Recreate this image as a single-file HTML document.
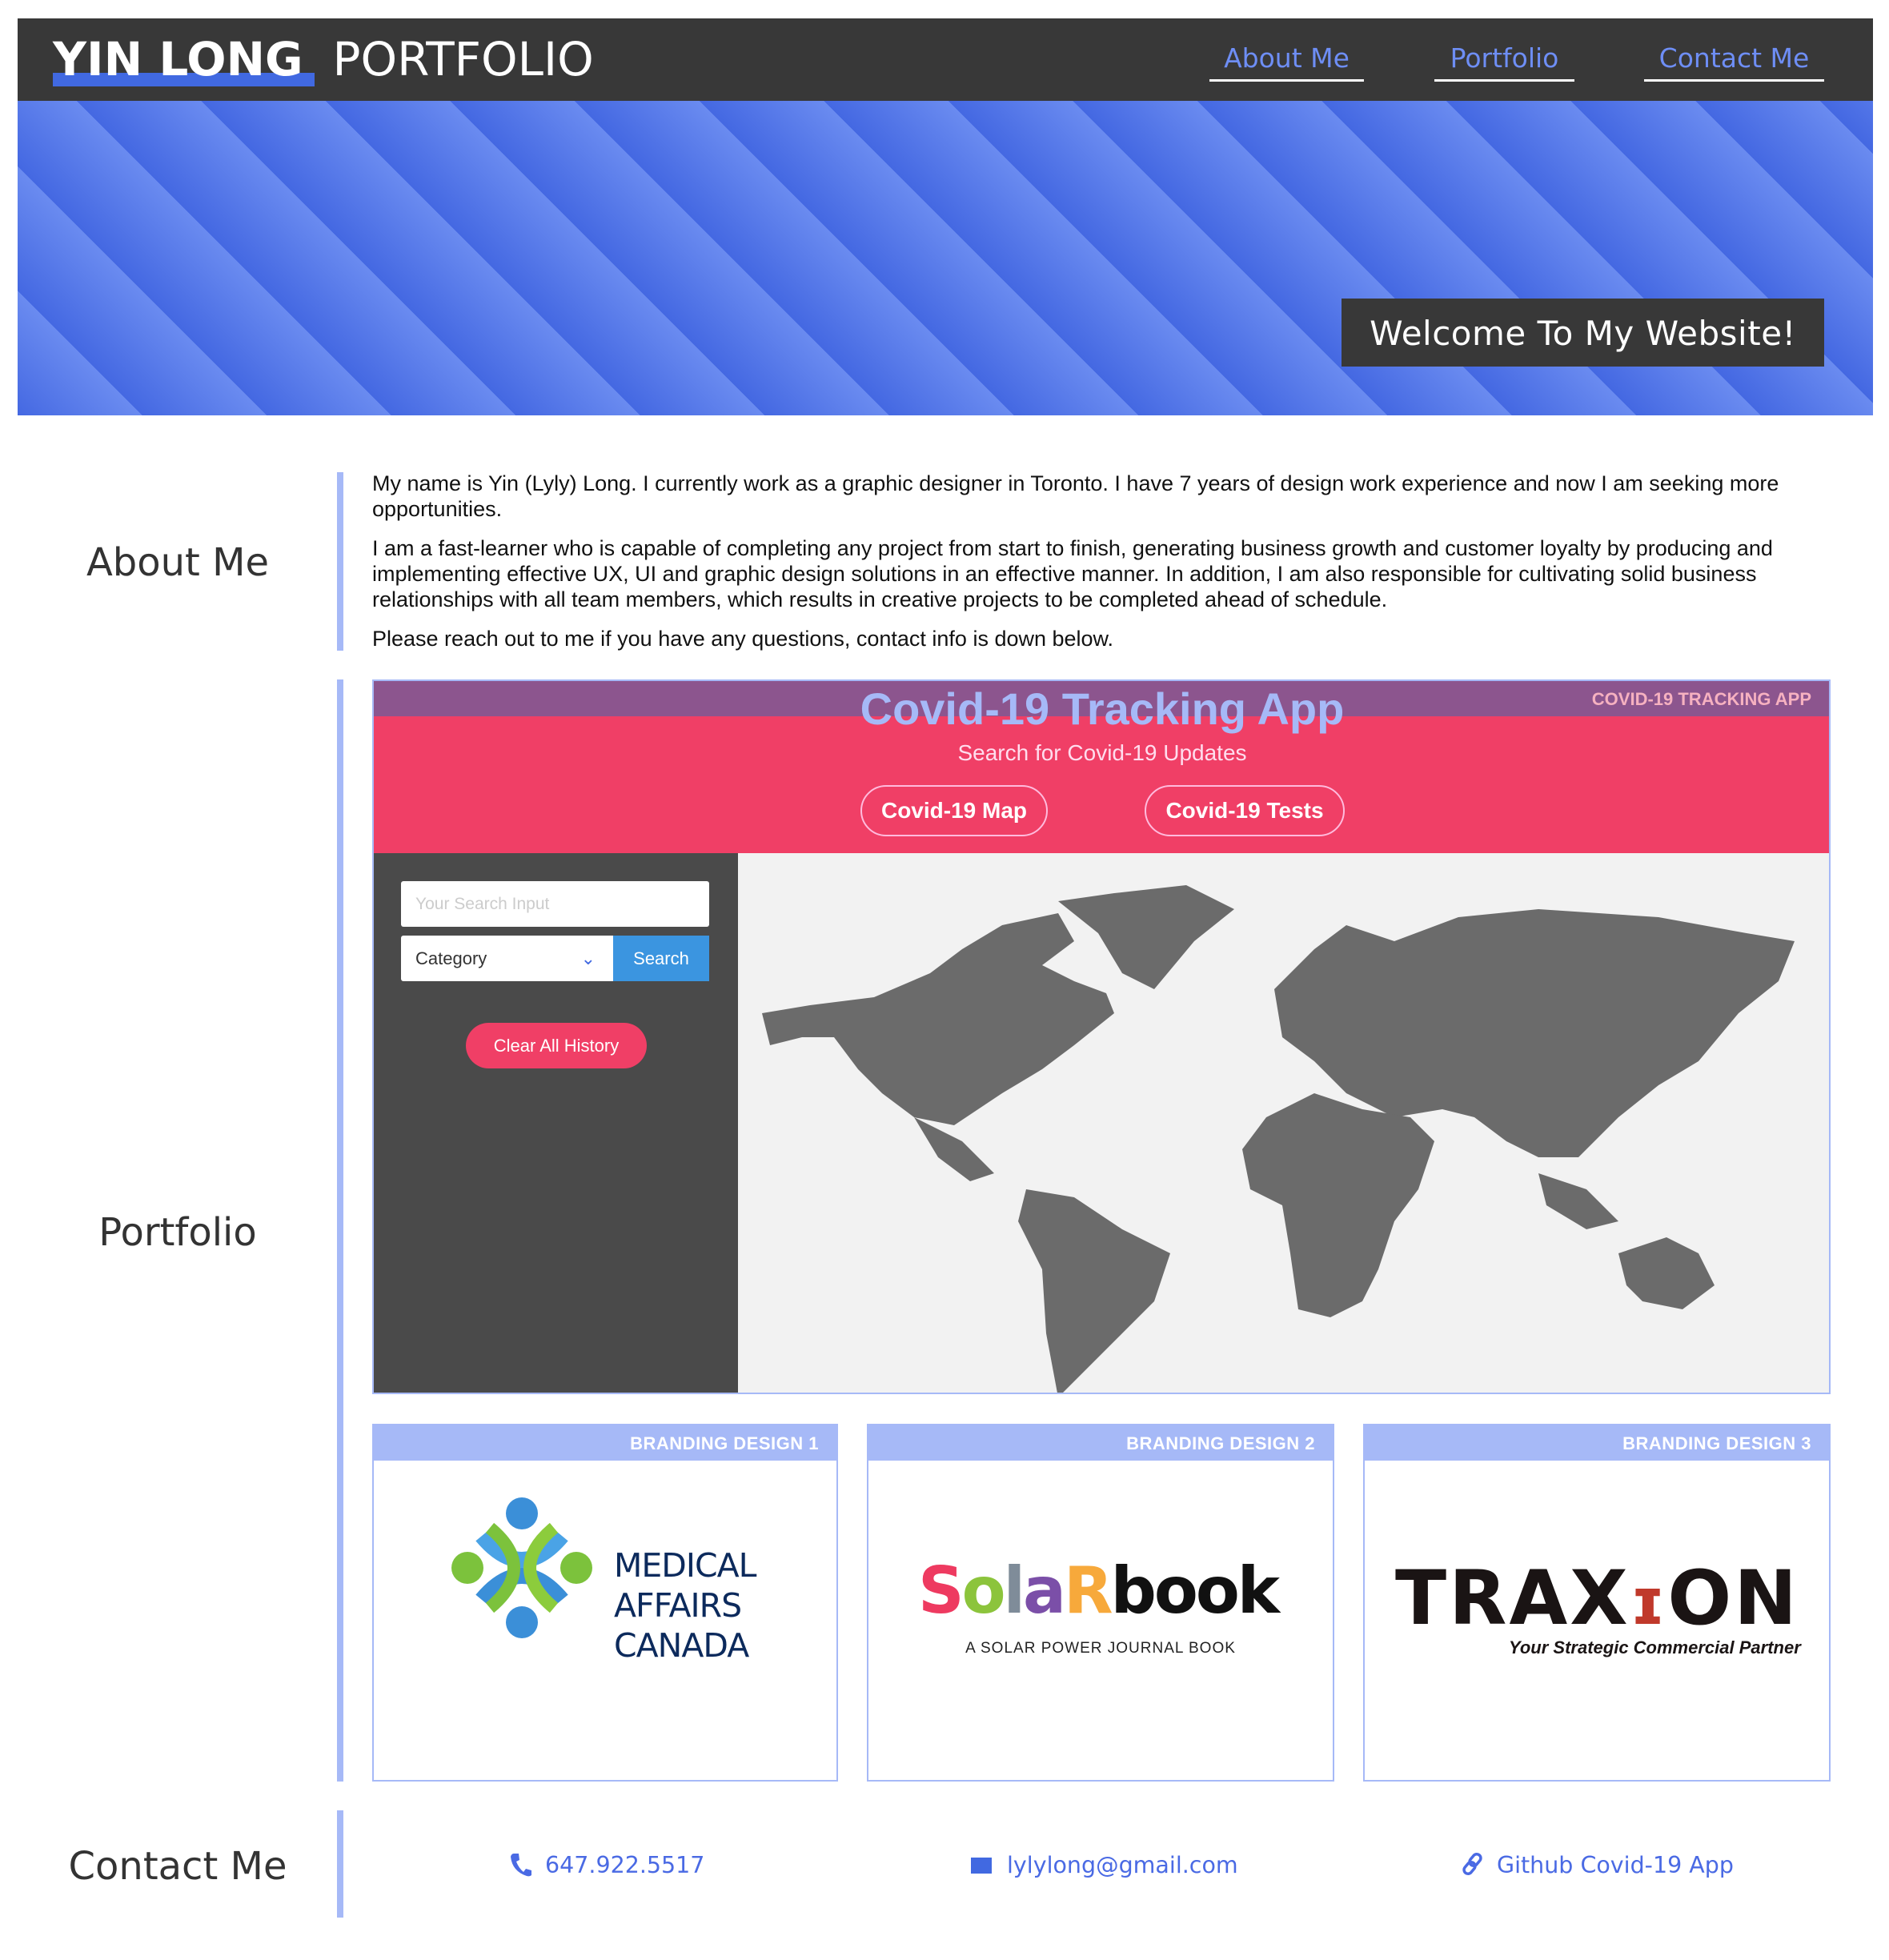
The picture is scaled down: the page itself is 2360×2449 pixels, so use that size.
<!DOCTYPE html>
<html><head><meta charset="utf-8"><style>
*{margin:0;padding:0;box-sizing:border-box}
body{width:2360px;height:2449px;background:#fff;position:relative;overflow:hidden;font-family:"Liberation Sans",sans-serif}
.abs{position:absolute}
.hdr{left:22px;top:23px;width:2318px;height:103px;background:#383838}
.hero{left:22px;top:126px;width:2318px;height:393px;background:repeating-linear-gradient(45deg,#4468e2 0px,#6a8bf0 110px)}
.logo{left:66px;top:40px;font-family:"DejaVu Sans",sans-serif;font-size:58px;color:#fff;white-space:nowrap}
.nav{font-family:"DejaVu Sans",sans-serif;font-size:33px;color:#6e8ef5;text-align:center;border-bottom:3px solid #fff;height:57px;line-height:56px;top:45px}
.lbl{font-family:"DejaVu Sans",sans-serif;font-size:48px;color:#333;width:444px;text-align:center;left:0}
.bar{left:421px;width:8px;background:#a6b9f7}
.p{font-size:27px;line-height:32px;color:#111;left:465px;width:1810px}
.card{border:2px solid #a6b9f7;background:#fff}
.ch{background:#a6b9f7;height:44px;color:#fff;font-weight:bold;font-size:22px;text-align:right;padding-right:22px;line-height:46px;letter-spacing:0.5px}
.ct{font-family:"DejaVu Sans",sans-serif;font-size:28.5px;color:#4a6ae4;top:2314px}
</style></head><body>
<div class="abs hdr"></div>
<div class="abs" style="left:66px;top:91px;width:327px;height:17px;background:#4169e1"></div>
<div class="abs logo"><b>YIN LONG</b>&nbsp; PORTFOLIO</div>
<div class="abs nav" style="left:1511px;width:193px">About Me</div>
<div class="abs nav" style="left:1792px;width:175px">Portfolio</div>
<div class="abs nav" style="left:2054px;width:225px">Contact Me</div>
<div class="abs hero"></div>
<div class="abs" style="left:1676px;top:373px;width:603px;height:85px;background:#383838;color:#fff;font-family:'DejaVu Sans',sans-serif;font-size:42px;line-height:88px;text-align:center;letter-spacing:0.5px">Welcome To My Website!</div>

<div class="abs lbl" style="top:675px">About Me</div>
<div class="abs bar" style="top:590px;height:223px"></div>
<div class="abs p" style="top:588px">My name is Yin (Lyly) Long. I currently work as a graphic designer in Toronto. I have 7 years of design work experience and now I am seeking more opportunities.</div>
<div class="abs p" style="top:669px">I am a fast-learner who is capable of completing any project from start to finish, generating business growth and customer loyalty by producing and implementing effective UX, UI and graphic design solutions in an effective manner. In addition, I am also responsible for cultivating solid business relationships with all team members, which results in creative projects to be completed ahead of schedule.</div>
<div class="abs p" style="top:782px">Please reach out to me if you have any questions, contact info is down below.</div>

<div class="abs lbl" style="top:1512px">Portfolio</div>
<div class="abs bar" style="top:849px;height:1377px"></div>

<div class="abs card" style="left:465px;top:849px;width:1822px;height:893px;overflow:hidden">
 <div class="abs" style="left:0;top:0;width:1820px;height:215px;background:#f03f66"></div>
 <div class="abs" style="left:0;top:0;width:1820px;height:44px;background:#8c558e"></div>
 <div class="abs" style="left:0;top:2px;width:1820px;text-align:center;font-size:56px;font-weight:bold;color:#a6b9f7">Covid-19 Tracking App</div>
 <div class="abs" style="right:22px;top:10px;font-size:22px;font-weight:bold;color:#f6b1c0">COVID-19 TRACKING APP</div>
 <div class="abs" style="left:0;top:74px;width:1820px;text-align:center;font-size:28px;color:#fde">Search for Covid-19 Updates</div>
 <div class="abs" style="left:608px;top:130px;width:234px;height:64px;border:2px solid #fbd;border-radius:32px;color:#fff;font-size:28px;font-weight:bold;text-align:center;line-height:60px">Covid-19 Map</div>
 <div class="abs" style="left:963px;top:130px;width:250px;height:64px;border:2px solid #fbd;border-radius:32px;color:#fff;font-size:28px;font-weight:bold;text-align:center;line-height:60px">Covid-19 Tests</div>
 <div class="abs" style="left:0;top:215px;width:455px;height:680px;background:#4a4a4a"></div>
 <div class="abs" style="left:455px;top:215px;width:1366px;height:680px;background:#f2f2f2"></div>
 <div class="abs" style="left:34px;top:250px;width:385px;height:57px;background:#fff;border-radius:3px;color:#ccc;font-size:21px;line-height:57px;padding-left:18px">Your Search Input</div>
 <div class="abs" style="left:34px;top:318px;width:265px;height:57px;background:#fff;border-radius:3px 0 0 3px;color:#333;font-size:22px;line-height:57px;padding-left:18px">Category<span style="position:absolute;right:22px;color:#4169e1">&#8964;</span></div>
 <div class="abs" style="left:299px;top:318px;width:120px;height:57px;background:#3b95e0;color:#fff;font-size:22px;line-height:57px;text-align:center">Search</div>
 <div class="abs" style="left:115px;top:427px;width:226px;height:57px;background:#f03f66;border-radius:29px;color:#fff;font-size:22px;line-height:57px;text-align:center">Clear All History</div>
 <svg class="abs" style="left:455px;top:215px" width="1366" height="680" viewBox="0 0 1366 680" fill="#6b6b6b">
  <path d="M30 200 L90 190 L170 180 L240 150 L280 120 L330 90 L400 75 L420 110 L380 140 L420 160 L460 175 L470 200 L420 240 L380 270 L330 300 L270 340 L220 330 L180 300 L150 270 L120 230 L80 230 L40 240Z"/>
  <path d="M400 60 L470 50 L560 40 L620 70 L570 110 L520 170 L480 150 L450 100Z"/>
  <path d="M220 330 L280 360 L320 400 L290 410 L250 380Z"/>
  <path d="M360 420 L420 430 L480 470 L540 500 L520 560 L480 600 L430 650 L400 680 L385 600 L380 520 L350 460Z"/>
  <path d="M670 170 L720 120 L760 90 L820 110 L900 80 L1000 70 L1150 80 L1260 100 L1320 110 L1300 160 L1250 200 L1200 260 L1150 290 L1100 330 L1050 380 L1000 380 L960 360 L920 330 L880 320 L820 330 L760 300 L720 260 L680 230Z"/>
  <path d="M660 330 L720 300 L780 320 L840 330 L870 360 L850 420 L820 460 L800 520 L780 560 L740 580 L700 570 L690 500 L680 440 L640 420 L630 370Z"/>
  <path d="M1100 500 L1160 480 L1200 500 L1220 540 L1180 570 L1130 560 L1110 540Z"/>
  <path d="M1000 400 L1060 420 L1100 460 L1060 470 L1010 440Z"/>
 </svg>
</div>

<div class="abs card" style="left:465px;top:1779px;width:582px;height:447px"><div class="ch">BRANDING DESIGN 1</div>
 <svg class="abs" style="left:95px;top:88px" width="180" height="180" viewBox="0 0 180 180">
  <circle cx="90" cy="22" r="20" fill="#3b8fd8"/><circle cx="90" cy="158" r="20" fill="#3b8fd8"/>
  <circle cx="22" cy="90" r="20" fill="#7cc23c"/><circle cx="158" cy="90" r="20" fill="#7cc23c"/>
  <path d="M40 50 Q90 110 140 50" stroke="#4aa3e6" stroke-width="20" fill="none"/>
  <path d="M40 130 Q90 70 140 130" stroke="#3b8fd8" stroke-width="20" fill="none"/>
  <path d="M50 40 Q110 90 50 140" stroke="#7cc23c" stroke-width="16" fill="none"/>
  <path d="M130 40 Q70 90 130 140" stroke="#8ccc3c" stroke-width="16" fill="none"/>
 </svg>
 <div class="abs" style="left:300px;top:150px;font-size:41px;line-height:50px;color:#0c2a5c;font-family:'DejaVu Sans',sans-serif;letter-spacing:-1px">MEDICAL<br>AFFAIRS<br>CANADA</div>
</div>
<div class="abs card" style="left:1083px;top:1779px;width:584px;height:447px"><div class="ch">BRANDING DESIGN 2</div>
 <div class="abs" style="left:62px;top:160px;font-size:80px;font-weight:bold;font-family:'DejaVu Sans',sans-serif;letter-spacing:-3px;white-space:nowrap"><span style="color:#ee3a60">S</span><span style="color:#8cc43c">o</span><span style="color:#7f8c99">l</span><span style="color:#7b4fa8">a</span><span style="color:#f7a93b">R</span><span style="color:#111">book</span></div>
 <div class="abs" style="left:0;width:580px;top:268px;text-align:center;font-size:19px;letter-spacing:1px;color:#222">A SOLAR POWER JOURNAL BOOK</div>
</div>
<div class="abs card" style="left:1703px;top:1779px;width:584px;height:447px"><div class="ch">BRANDING DESIGN 3</div>
 <div class="abs" style="left:38px;top:162px;font-size:94px;font-weight:bold;font-family:'DejaVu Sans',sans-serif;color:#1a1414;letter-spacing:3px;white-space:nowrap">TRAX<span style="color:#c0392b;font-size:80px">ɪ</span>ON</div>
 <div class="abs" style="left:180px;top:265px;font-size:22px;font-style:italic;font-weight:bold;color:#1a1414">Your Strategic Commercial Partner</div>
</div>

<div class="abs lbl" style="top:2304px">Contact Me</div>
<div class="abs bar" style="top:2262px;height:134px"></div>
<svg class="abs" style="left:636px;top:2314px" width="30" height="32" viewBox="0 0 30 32"><path d="M6 2 L12 2 L13 10 L9 12 Q12 20 18 25 L21 21 L28 23 L28 29 Q26 31 22 30 Q4 24 2 6 Q3 2 6 2Z" fill="#4a6ae4"/></svg>
<div class="abs" style="left:1213px;top:2321px;width:26px;height:20px;background:#4169e1"></div>
<div class="abs ct" style="left:681px">647.922.5517</div>
<div class="abs ct" style="left:1258px">lylylong@gmail.com</div>
<svg class="abs" style="left:1824px;top:2313px" width="32" height="32" viewBox="0 0 32 32" fill="none" stroke="#4a6ae4" stroke-width="3.5"><rect x="14" y="3" width="10" height="16" rx="5" transform="rotate(40 19 11)"/><rect x="7" y="13" width="10" height="16" rx="5" transform="rotate(40 12 21)"/></svg>
<div class="abs ct" style="left:1870px">Github Covid-19 App</div>
</body></html>
